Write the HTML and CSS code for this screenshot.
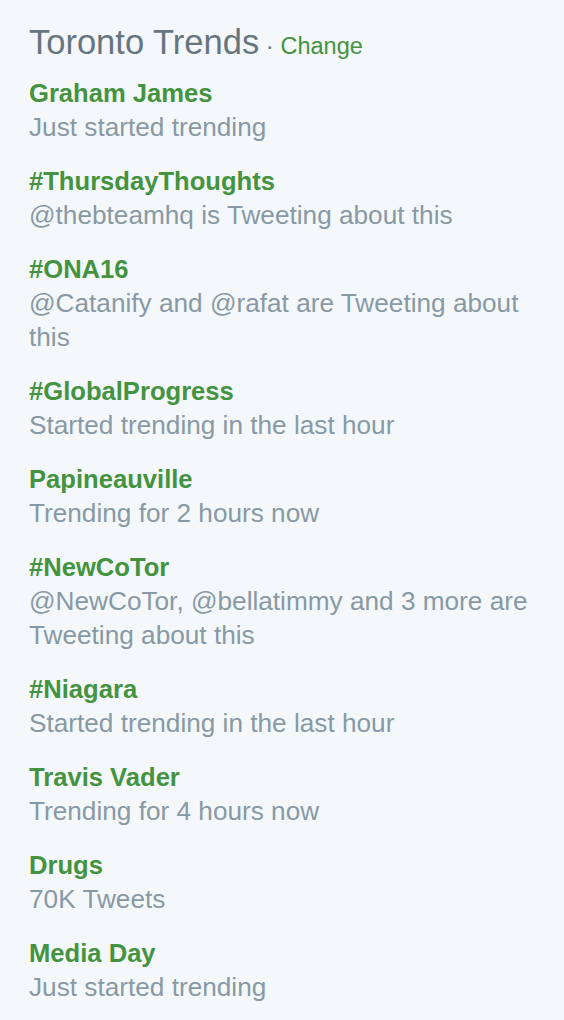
FILE: index.html
```html
<!DOCTYPE html>
<html>
<head>
<meta charset="utf-8">
<link rel="stylesheet" href="styles.css">
</head>
<body>
<div class="trends">
  <div class="header"><span class="title">Toronto Trends</span><span class="dot"> · </span><span class="change">Change</span></div>
  <ul class="list">
    <li class="item"><div class="name">Graham James</div><div class="meta">Just started trending</div></li>
    <li class="item"><div class="name">#ThursdayThoughts</div><div class="meta">@thebteamhq is Tweeting about this</div></li>
    <li class="item"><div class="name">#ONA16</div><div class="meta">@Catanify and @rafat are Tweeting about this</div></li>
    <li class="item"><div class="name">#GlobalProgress</div><div class="meta">Started trending in the last hour</div></li>
    <li class="item"><div class="name">Papineauville</div><div class="meta">Trending for 2 hours now</div></li>
    <li class="item"><div class="name">#NewCoTor</div><div class="meta">@NewCoTor, @bellatimmy and 3 more are Tweeting about this</div></li>
    <li class="item"><div class="name">#Niagara</div><div class="meta">Started trending in the last hour</div></li>
    <li class="item"><div class="name">Travis Vader</div><div class="meta">Trending for 4 hours now</div></li>
    <li class="item"><div class="name">Drugs</div><div class="meta">70K Tweets</div></li>
    <li class="item"><div class="name">Media Day</div><div class="meta">Just started trending</div></li>
  </ul>
</div>
</body>
</html>
```
FILE: styles.css
```css
html, body {
  margin: 0;
  padding: 0;
  background: #f5f8fa;
}
body {
  font-family: "Liberation Sans", Arial, sans-serif;
}
.trends {
  padding: 22px 30px 0 29px;
  width: 505px;
}
.header {
  line-height: 40px;
  height: 40px;
  white-space: nowrap;
}
.title {
  font-size: 34.5px;
  color: #66757f;
}
.dot {
  font-size: 24px;
  color: #66757f;
}
.change {
  font-size: 23.5px;
  color: #439340;
}
.list {
  list-style: none;
  margin: 14px 0 0 0;
  padding: 0;
  display: flex;
  flex-direction: column;
  gap: 20px;
}
.name {
  font-size: 25.6px;
  font-weight: bold;
  color: #439340;
  line-height: 34px;
}
.meta {
  font-size: 26.2px;
  color: #8899a6;
  line-height: 34px;
}
```
